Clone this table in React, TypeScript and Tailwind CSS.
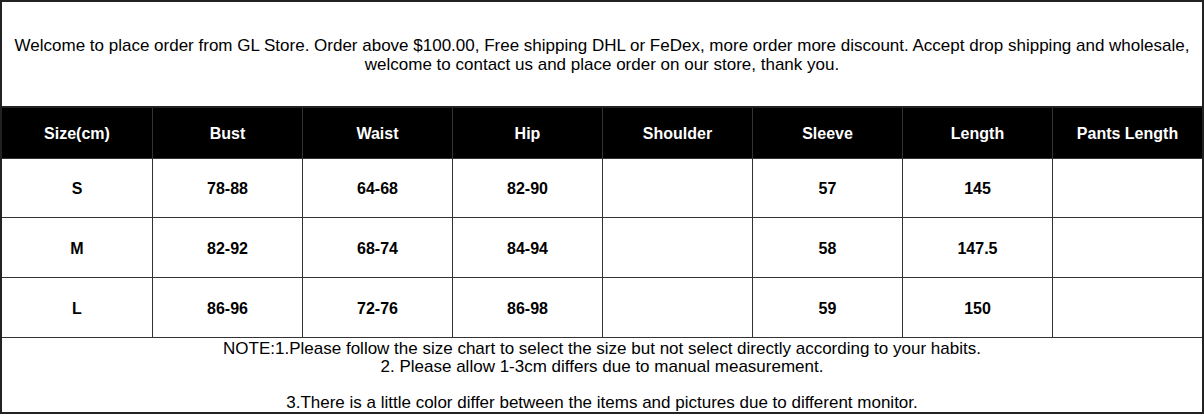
const headers = ['Size(cm)', 'Bust', 'Waist', 'Hip', 'Shoulder', 'Sleeve', 'Length', 'Pants Length']

const rows = [
  ['S', '78-88', '64-68', '82-90', '', '57', '145', ''],
  ['M', '82-92', '68-74', '84-94', '', '58', '147.5', ''],
  ['L', '86-96', '72-76', '86-98', '', '59', '150', ''],
]

export default function App() {
  return (
    <div className="h-[414px] w-[1204px] bg-white font-['Liberation_Sans',Arial,sans-serif] text-black">
      <div className="flex h-full flex-col border-2 border-[#222]">
        <div className="flex h-[106px] items-center justify-center border-b-2 border-[#222] pt-[3px] text-center text-[17px] leading-[19px]">
          <p>
            Welcome to place order from GL Store. Order above $100.00, Free shipping DHL or FeDex, more order more discount. Accept drop shipping and wholesale,
            <br />
            welcome to contact us and place order on our store, thank you.
          </p>
        </div>

        <div className="grid h-[50px] grid-cols-[150px_150px_150px_150px_150px_150px_150px_1fr] bg-black">
          {headers.map((h, i) => (
            <div
              key={h}
              className={`flex items-center justify-center pt-[3px] text-[16px] font-bold text-white ${i > 0 ? 'border-l border-[#333]' : ''}`}
            >
              {h}
            </div>
          ))}
        </div>

        {rows.map((r) => (
          <div
            key={r[0]}
            className="grid h-[60px] grid-cols-[150px_150px_150px_150px_150px_150px_150px_1fr] border-t border-[#333]"
          >
            {r.map((c, i) => (
              <div
                key={i}
                className={`flex items-center justify-center pt-[3px] text-[16px] font-bold ${i > 0 ? 'border-l border-[#333]' : ''}`}
              >
                {c}
              </div>
            ))}
          </div>
        ))}

        <div className="flex-1 border-t border-[#333] pt-[2px] text-center text-[17px] leading-[18px]">
          <p>NOTE:1.Please follow the size chart to select the size but not select directly according to your habits.</p>
          <p>2. Please allow 1-3cm differs due to manual measurement.</p>
          <p>&nbsp;</p>
          <p>3.There is a little color differ between the items and pictures due to different monitor.</p>
        </div>
      </div>
    </div>
  )
}
